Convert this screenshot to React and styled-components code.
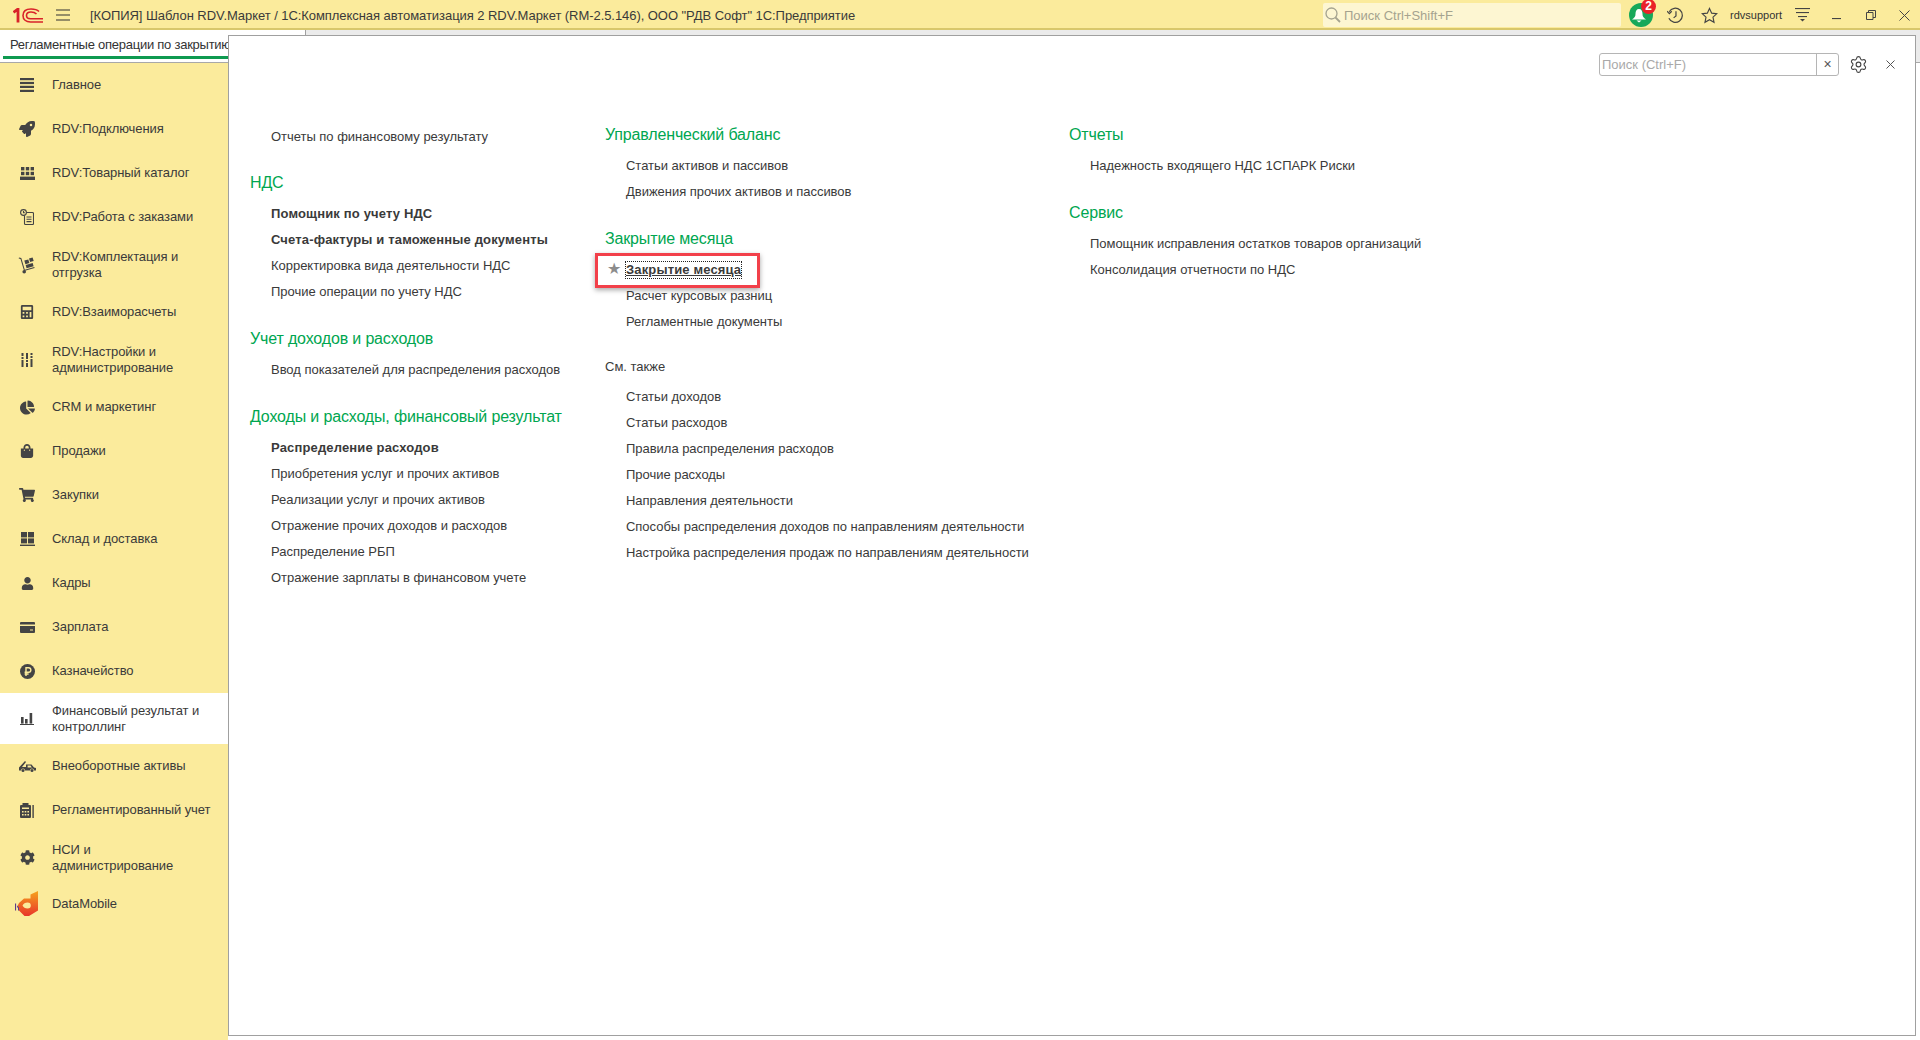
import React from 'react'
import styled, { createGlobalStyle } from 'styled-components'
import { Settings } from 'lucide-react'
import {
  FaRocket, FaCalculator, FaChartPie, FaShoppingBag, FaShoppingCart, FaCog, FaUser,
} from 'react-icons/fa'

const GlobalStyle = createGlobalStyle`
  html, body {
    margin: 0;
    padding: 0;
    height: 100%;
    background: #fff;
    overflow: hidden;
  }
  body {
    font-family: "Liberation Sans", Arial, sans-serif;
    font-size: 13px;
    color: #333;
  }
`

/* small glyphs that the icon packages do not have */
const ListIcon = () => (
  <svg width="14" height="14" viewBox="0 0 14 14" fill="#444">
    <rect y="0" width="14" height="2.2" /><rect y="3.9" width="14" height="2.2" />
    <rect y="7.8" width="14" height="2.2" /><rect y="11.8" width="14" height="2.2" />
  </svg>
)
const CatalogIcon = () => (
  <svg width="15" height="13" viewBox="0 0 15 13" fill="#444">
    <rect x="1" width="3.4" height="3.4" /><rect x="5.8" width="3.4" height="3.4" /><rect x="10.6" width="3.4" height="3.4" />
    <rect x="1" y="4.8" width="3.4" height="3.4" /><rect x="5.8" y="4.8" width="3.4" height="3.4" /><rect x="10.6" y="4.8" width="3.4" height="3.4" />
    <rect y="9.6" width="15" height="3.4" />
  </svg>
)
const OrdersIcon = () => (
  <svg width="14" height="16" viewBox="0 0 14 16" fill="none" stroke="#444" strokeWidth="1.1">
    <rect x="4.5" y="3.5" width="9" height="12" rx="1" />
    <circle cx="3.5" cy="3.5" r="2.9" fill="#fbeb9c" />
    <path d="M3.5 2v1.7h1.4M6.5 8h5M6.5 10.3h5M6.5 12.6h5" />
  </svg>
)
const HandTruckIcon = () => (
  <svg width="18" height="18" viewBox="0 0 18 18" fill="#444">
    <path d="M1 1.5l2.3.6 3.5 11.6 9.5-2.7.3 1.1-10.5 3-3.6-12.1-1.8-.5z" />
    <circle cx="6.2" cy="15.8" r="1.8" />
    <path d="M6.3 4.6l4-1.2 1.1 3.6-4 1.2zM11 2.5l3.6-1 1.1 3.6-3.6 1zM7.7 9l7-2 .9 3.2-7 2z" />
  </svg>
)
const SlidersIcon = () => (
  <svg width="12" height="14" viewBox="0 0 12 14" fill="#444">
    <rect x="0.5" width="2" height="3" /><rect x="0.5" y="4" width="2" height="2" /><rect x="0.5" y="7" width="2" height="7" />
    <rect x="5" width="2" height="6" /><rect x="5" y="7" width="2" height="2" /><rect x="5" y="10" width="2" height="4" />
    <rect x="9.5" width="2" height="2" /><rect x="9.5" y="3" width="2" height="2" /><rect x="9.5" y="6" width="2" height="8" />
  </svg>
)
const WarehouseIcon = () => (
  <svg width="15" height="14" viewBox="0 0 15 14" fill="#444">
    <rect x="1" width="6" height="5.4" /><rect x="8" width="6" height="5.4" />
    <rect x="1" y="6.4" width="6" height="5" /><rect x="8" y="6.4" width="6" height="5" />
    <rect y="12.6" width="15" height="1.4" />
  </svg>
)
const CardIcon = () => (
  <svg width="15" height="11" viewBox="0 0 15 11" fill="#444">
    <path d="M1 0h13a1 1 0 011 1v1.6H0V1a1 1 0 011-1zM0 4h15v6a1 1 0 01-1 1H1a1 1 0 01-1-1zM10 7.4v1.2h3V7.4z" fillRule="evenodd" />
  </svg>
)
const RubleIcon = () => (
  <svg width="15" height="15" viewBox="0 0 15 15">
    <circle cx="7.5" cy="7.5" r="7.5" fill="#444" />
    <path d="M6 12V3.7h2.6a2.2 2.2 0 010 4.5H4.6M4.6 10h4" fill="none" stroke="#fbeb9c" strokeWidth="1.4" />
  </svg>
)
const BarsIcon = () => (
  <svg width="14" height="13" viewBox="0 0 14 13" fill="#444">
    <rect x="1" y="5" width="2.6" height="6.6" /><rect x="5" y="7" width="2.6" height="4.6" />
    <rect x="9.6" y="1" width="2.6" height="10.6" /><rect y="12" width="14" height="1" />
  </svg>
)
const TruckIcon = () => (
  <svg width="17" height="12" viewBox="0 0 17 12" fill="#444">
    <path d="M0 7.5L6 1l1 1-4 5h4V4.5h5.5L15 7.5l2 .5v2.4h-2a2 2 0 00-4 0H6a2 2 0 00-4 0H0zM8.6 5.6v2h4.2l-1.3-2z" fillRule="evenodd" />
    <circle cx="4" cy="10.4" r="1.5" /><circle cx="13" cy="10.4" r="1.5" />
  </svg>
)
const RegulatedIcon = () => (
  <svg width="14" height="15" viewBox="0 0 14 15" fill="#444">
    <path d="M1 2h1.5V0h6v2H10a1 1 0 011 1v11a1 1 0 01-1 1H1a1 1 0 01-1-1V3a1 1 0 011-1zM2 4.5V6h7V4.5zM2 8v1.4h1.6V8zm2.7 0v1.4h1.6V8zm2.7 0v1.4H9V8zM2 11v1.4h1.6V11zm2.7 0v1.4h1.6V11zm2.7 0v1.4H9V11z" fillRule="evenodd" />
    <rect x="12.4" y="2" width="1.4" height="13" />
  </svg>
)
const DataMobileIcon = () => (
  <svg width="24" height="26" viewBox="0 0 24 26">
    <defs>
      <linearGradient id="dmGrad" x1="0" y1="0" x2="0" y2="1">
        <stop offset="0" stopColor="#f6a21e" />
        <stop offset="1" stopColor="#e8352a" />
      </linearGradient>
    </defs>
    <path d="M23 0v19.5L14 25H9.5L3.5 19l-1-4 1.5-3 5-4.600H15.5V3.5zM12.5 11.5c-2.400 0-4 1.200-5 3 1 2 2.600 3 5 3s3.300-1.300 3.300-3-.9-3-3.300-3z" fill="url(#dmGrad)" fillRule="evenodd" />
    <path d="M0 12.5h1.100v7H0zM2 14.5l2 2v3H3v-2.500l-1-1z" fill="#5b3a8c" />
  </svg>
)

const NAV = [
  { label: 'Главное', icon: <ListIcon /> },
  { label: 'RDV:Подключения', icon: <FaRocket size={16} /> },
  { label: 'RDV:Товарный каталог', icon: <CatalogIcon /> },
  { label: 'RDV:Работа с заказами', icon: <OrdersIcon /> },
  { label: 'RDV:Комплектация и отгрузка', icon: <HandTruckIcon /> },
  { label: 'RDV:Взаиморасчеты', icon: <FaCalculator size={14} /> },
  { label: 'RDV:Настройки и администрирование', icon: <SlidersIcon /> },
  { label: 'CRM и маркетинг', icon: <FaChartPie size={15} /> },
  { label: 'Продажи', icon: <FaShoppingBag size={14} /> },
  { label: 'Закупки', icon: <FaShoppingCart size={16} /> },
  { label: 'Склад и доставка', icon: <WarehouseIcon /> },
  { label: 'Кадры', icon: <FaUser size={13} /> },
  { label: 'Зарплата', icon: <CardIcon /> },
  { label: 'Казначейство', icon: <RubleIcon /> },
  { label: 'Финансовый результат и контроллинг', icon: <BarsIcon />, active: true },
  { label: 'Внеоборотные активы', icon: <TruckIcon /> },
  { label: 'Регламентированный учет', icon: <RegulatedIcon /> },
  { label: 'НСИ и администрирование', icon: <FaCog size={15} /> },
  { label: 'DataMobile', icon: <DataMobileIcon />, short: true },
]

const COLUMNS = [
  {
    width: 355,
    groups: [
      { links: [{ text: 'Отчеты по финансовому результату' }], tight: true },
      {
        title: 'НДС',
        links: [
          { text: 'Помощник по учету НДС', bold: true },
          { text: 'Счета-фактуры и таможенные документы', bold: true },
          { text: 'Корректировка вида деятельности НДС' },
          { text: 'Прочие операции по учету НДС' },
        ],
      },
      {
        title: 'Учет доходов и расходов',
        links: [{ text: 'Ввод показателей для распределения расходов' }],
      },
      {
        title: 'Доходы и расходы, финансовый результат',
        links: [
          { text: 'Распределение расходов', bold: true },
          { text: 'Приобретения услуг и прочих активов' },
          { text: 'Реализации услуг и прочих активов' },
          { text: 'Отражение прочих доходов и расходов' },
          { text: 'Распределение РБП' },
          { text: 'Отражение зарплаты в финансовом учете' },
        ],
      },
    ],
  },
  {
    width: 464,
    top: 1,
    groups: [
      {
        title: 'Управленческий баланс',
        links: [
          { text: 'Статьи активов и пассивов' },
          { text: 'Движения прочих активов и пассивов' },
        ],
      },
      {
        title: 'Закрытие месяца',
        tight: true,
        links: [
          { text: 'Закрытие месяца', focused: true },
          { text: 'Расчет курсовых разниц' },
          { text: 'Регламентные документы' },
        ],
      },
      {
        subtitle: 'См. также',
        links: [
          { text: 'Статьи доходов' },
          { text: 'Статьи расходов' },
          { text: 'Правила распределения расходов' },
          { text: 'Прочие расходы' },
          { text: 'Направления деятельности' },
          { text: 'Способы распределения доходов по направлениям деятельности' },
          { text: 'Настройка распределения продаж по направлениям деятельности' },
        ],
      },
    ],
  },
  {
    width: 500,
    top: 1,
    groups: [
      {
        title: 'Отчеты',
        links: [{ text: 'Надежность входящего НДС 1СПАРК Риски' }],
      },
      {
        title: 'Сервис',
        links: [
          { text: 'Помощник исправления остатков товаров организаций' },
          { text: 'Консолидация отчетности по НДС' },
        ],
      },
    ],
  },
]

function App() {
  return (
    <Page>
      <GlobalStyle />
      <TitleBar>
        <Logo>
          <svg width="30" height="15" viewBox="0 0 30 15" fill="none" stroke="#d8232a">
            <path d="M0.5 4.5L5 1V14.5" strokeWidth="2.8" />
            <path d="M26 3.5C24 1.5 21 1 18 1c-5 0-8 2.5-8 6.5s3 6.5 7.5 6.500H30" strokeWidth="1.6" />
            <path d="M23.5 6C22 4.5 20 4 18 4c-2.500 0-4.500 1.200-4.500 3.500S15 10.800 17.500 10.800H30" strokeWidth="1.6" />
          </svg>
        </Logo>
        <Burger>
          <svg width="14" height="12" viewBox="0 0 14 12" stroke="#333" strokeWidth="1.2">
            <path d="M0 1h14M0 6h14M0 11h14" />
          </svg>
        </Burger>
        <WindowTitle>
          [КОПИЯ] Шаблон RDV.Маркет / 1С:Комплексная автоматизация 2 RDV.Маркет (RM-2.5.146), ООО "РДВ Софт" 1С:Предприятие
        </WindowTitle>
        <GlobalSearch>
          <svg width="16" height="16" viewBox="0 0 16 16" fill="none" stroke="#a5a38f" strokeWidth="1.3">
            <circle cx="6.5" cy="6.5" r="5.5" />
            <path d="M10.5 10.5l4.5 4.5" strokeWidth="1.8" />
          </svg>
          Поиск Ctrl+Shift+F
        </GlobalSearch>
        <Bell>
          <svg width="15" height="15" viewBox="0 0 15 15" fill="#fff">
            <path d="M7 1c2.500 0 3.500 2 3.500 5 0 2.500 1 3.500 3.500 5.500H0C2.500 9.500 3.500 8.500 3.500 6 3.500 3 4.500 1 7 1zM4.500 12.500h5L7 14.500z" />
          </svg>
          <BellBadge>2</BellBadge>
        </Bell>
        <BarButton $width={34} $margin={5}>
          <svg width="17" height="17" viewBox="0 0 18 18" fill="none" stroke="#444" strokeWidth="1.3">
            <path d="M2.300 5A7.500 7.500 0 112 12" />
            <path d="M0 4.500l2.500 2.500L5 4.500" />
            <path d="M9.500 4.500V9.500l-2.500 2" />
          </svg>
        </BarButton>
        <BarButton $width={34}>
          <svg width="17" height="17" viewBox="0 0 18 18" fill="none" stroke="#444" strokeWidth="1.2">
            <path d="M9 1.500l2.300 5 5.400.6-4 3.700 1.100 5.400L9 13.500l-4.800 2.700 1.100-5.400-4-3.700 5.400-.6z" />
          </svg>
        </BarButton>
        <UserName>rdvsupport</UserName>
        <BarButton $width={35}>
          <svg width="15" height="14" viewBox="0 0 15 14" fill="#444">
            <rect width="15" height="1.1" /><rect x="1" y="4" width="13" height="1.1" /><rect x="3" y="8" width="9" height="1.1" />
            <path d="M5 11h5l-2.500 2.500z" />
          </svg>
        </BarButton>
        <BarButton $width={34}>
          <svg width="10" height="10" viewBox="0 0 10 10" fill="#444"><rect y="8" width="9" height="1.1" /></svg>
        </BarButton>
        <BarButton $width={34}>
          <svg width="10" height="10" viewBox="0 0 10 10" fill="none" stroke="#444"><path d="M.5 2.500h6.500v7H.5zM2.500 2.500V.5h7v7H7" /></svg>
        </BarButton>
        <BarButton $width={32}>
          <svg width="11" height="11" viewBox="0 0 11 11" stroke="#444" strokeWidth="1"><path d="M.5.5l10 10M10.500.5l-10 10" /></svg>
        </BarButton>
      </TitleBar>

      <Workspace>
        <LeftColumn>
          <TabStrip>
            <TabLabel>Регламентные операции по закрытию месяца</TabLabel>
          </TabStrip>
          <Sidebar>
            {NAV.map((item) => (
              <NavItem key={item.label} $active={item.active} $short={item.short}>
                <NavIcon>{item.icon}</NavIcon>
                <NavLabel>{item.label}</NavLabel>
              </NavItem>
            ))}
          </Sidebar>
        </LeftColumn>

        <RightColumn>
          <TabTail />
          <PanelRow>
            <Panel>
              <PanelToolbar>
                <PanelSearch>
                  <PanelSearchText>Поиск (Ctrl+F)</PanelSearchText>
                  <PanelSearchClear>×</PanelSearchClear>
                </PanelSearch>
                <GearButton>
                  <Settings size={19} strokeWidth={1.4} color="#444" />
                </GearButton>
                <PanelClose>
                  <svg width="9" height="9" viewBox="0 0 9 9" stroke="#555" strokeWidth="1"><path d="M.5.5l8 8M8.500.5l-8 8" /></svg>
                </PanelClose>
              </PanelToolbar>

              <Columns>
                {COLUMNS.map((col, i) => (
                  <Column key={i} $width={col.width} $top={col.top}>
                    {col.groups.map((group, j) => (
                      <Group key={j} $tight={group.tight}>
                        {group.title && <GroupTitle>{group.title}</GroupTitle>}
                        {group.subtitle && <GroupSubtitle>{group.subtitle}</GroupSubtitle>}
                        {group.links.map((link) => (
                          <LinkRow key={link.text}>
                            {link.focused && (
                              <Callout>
                                <Star>★</Star>
                              </Callout>
                            )}
                            <LinkText $bold={link.bold} $focused={link.focused}>{link.text}</LinkText>
                          </LinkRow>
                        ))}
                      </Group>
                    ))}
                  </Column>
                ))}
              </Columns>
            </Panel>
            <PanelEdge />
          </PanelRow>
        </RightColumn>
      </Workspace>
    </Page>
  )
}

export default App

const Page = styled.div`
  width: 1920px;
  height: 1040px;
  display: flex;
  flex-direction: column;
  background: #fff;
  overflow: hidden;
`

const TitleBar = styled.header`
  height: 30px;
  box-sizing: border-box;
  padding-top: 2px;
  flex: none;
  display: flex;
  align-items: center;
  background: #fbeb9c;
  border-bottom: 2px solid #d8c76b;
`

const Logo = styled.div`
  width: 50px;
  padding-left: 13px;
  box-sizing: border-box;
  display: flex;
  align-items: center;
`

const Burger = styled.div`
  width: 40px;
  padding-left: 6px;
  box-sizing: border-box;
  display: flex;
  align-items: center;
`

const WindowTitle = styled.div`
  flex: 1;
  white-space: nowrap;
  overflow: hidden;
  font-size: 13px;
  letter-spacing: -0.06px;
  color: #3a3a3a;
`

const GlobalSearch = styled.div`
  width: 298px;
  height: 24px;
  display: flex;
  align-items: center;
  gap: 3px;
  padding-left: 2px;
  box-sizing: border-box;
  background: #fdf6d2;
  border-radius: 2px;
  color: #a5a38f;
  font-size: 13px;
`

const Bell = styled.div`
  position: relative;
  width: 24px;
  height: 24px;
  margin-left: 8px;
  padding-right: 3px;
  box-sizing: border-box;
  border-radius: 50%;
  background: #17a85a;
  display: flex;
  align-items: center;
  justify-content: center;
`

const BellBadge = styled.span`
  position: absolute;
  top: -4px;
  right: -3px;
  width: 15px;
  height: 15px;
  border-radius: 50%;
  background: #ea2229;
  color: #fff;
  font-size: 12px;
  font-weight: 700;
  line-height: 15px;
  text-align: center;
`

const BarButton = styled.div`
  width: ${(p) => p.$width}px;
  margin-left: ${(p) => p.$margin || 0}px;
  height: 24px;
  flex: none;
  display: flex;
  align-items: center;
  justify-content: center;
`

const UserName = styled.div`
  width: 55px;
  margin-left: 4px;
  font-size: 11px;
  white-space: nowrap;
  color: #333;
`

const Workspace = styled.div`
  flex: 1;
  min-height: 0;
  display: flex;
`

const LeftColumn = styled.div`
  width: 228px;
  flex: none;
  display: flex;
  flex-direction: column;
`

const TabStrip = styled.div`
  height: 33px;
  flex: none;
  box-sizing: border-box;
  padding: 0 0 0 3px;
  background: #fff;
  border-bottom: 1px solid #a8a8a8;
  overflow: hidden;
`

const TabLabel = styled.div`
  height: 29px;
  box-sizing: border-box;
  padding: 7px 0 0 7px;
  line-height: 16px;
  font-size: 13px;
  letter-spacing: -0.25px;
  white-space: nowrap;
  color: #333;
  border-bottom: 3px solid #0e9a50;
`

const Sidebar = styled.nav`
  flex: 1;
  background: #fbeb9c;
`

const NavItem = styled.div`
  min-height: ${(p) => (p.$short ? 42 : 44)}px;
  box-sizing: border-box;
  padding: ${(p) => (p.$short ? 0 : 9.5)}px 0;
  display: flex;
  align-items: center;
  background: ${(p) => (p.$active ? '#fff' : 'transparent')};
`

const NavIcon = styled.div`
  width: 52px;
  padding-left: 2px;
  box-sizing: border-box;
  flex: none;
  display: flex;
  align-items: center;
  justify-content: center;
  color: #444;
`

const NavLabel = styled.div`
  max-width: 162px;
  font-size: 13px;
  line-height: 16px;
  letter-spacing: -0.08px;
  color: #3a3a3a;
`

const RightColumn = styled.div`
  flex: 1;
  min-width: 0;
  display: flex;
  flex-direction: column;
`

// the part of the tab row that shows above the panel
const TabTail = styled.div`
  height: 5px;
  flex: none;
  background: linear-gradient(to right, #fff 77px, #a0a0a0 77px, #a0a0a0 78px, #ebebeb 78px);
`

const PanelRow = styled.div`
  flex: 1;
  min-height: 0;
  display: flex;
  padding-bottom: 4px;
`

const Panel = styled.main`
  flex: 1;
  min-width: 0;
  background: #fff;
  border: 1px solid #a0a0a0;
`

const PanelEdge = styled.div`
  width: 4px;
  height: 27px;
  flex: none;
  background: #ebebeb;
  border-bottom: 1px solid #a8a8a8;
`

const PanelToolbar = styled.div`
  height: 88px;
  box-sizing: border-box;
  padding: 17px 13px 0 0;
  display: flex;
  align-items: flex-start;
  justify-content: flex-end;
`

const PanelSearch = styled.div`
  width: 240px;
  height: 23px;
  box-sizing: border-box;
  display: flex;
  border: 1px solid #b5b5b5;
  border-radius: 3px;
`

const PanelSearchText = styled.div`
  flex: 1;
  padding-left: 2px;
  line-height: 21px;
  font-size: 13px;
  color: #a9a9a9;
  border-right: 1px solid #b5b5b5;
`

const PanelSearchClear = styled.div`
  width: 21px;
  line-height: 20px;
  text-align: center;
  color: #555;
  font-size: 14px;
`

const GearButton = styled.div`
  width: 39px;
  height: 23px;
  display: flex;
  align-items: center;
  justify-content: center;
`

const PanelClose = styled.div`
  width: 24px;
  height: 23px;
  display: flex;
  align-items: center;
  justify-content: center;
`

const Columns = styled.div`
  display: flex;
  padding-left: 21px;
`

const Column = styled.div`
  width: ${(p) => p.$width}px;
  padding-top: ${(p) => p.$top || 0}px;
  flex: none;
`

const Group = styled.section`
  margin-bottom: ${(p) => (p.$tight ? 23 : 24)}px;
`

const GroupTitle = styled.h3`
  margin: 0 0 8px;
  height: 20px;
  line-height: 20px;
  font-size: 16px;
  font-weight: 400;
  letter-spacing: -0.15px;
  color: #00a650;
  white-space: nowrap;
`

const GroupSubtitle = styled.div`
  height: 18px;
  margin-bottom: 8px;
  line-height: 18px;
  font-size: 13px;
  color: #3a3a3a;
`

const LinkRow = styled.div`
  position: relative;
  height: 26px;
  padding-left: 21px;
  display: flex;
  align-items: center;
`

const LinkText = styled.span`
  position: relative;
  font-size: 13px;
  line-height: 16px;
  white-space: nowrap;
  color: #3a3a3a;
  font-weight: ${(p) => (p.$bold || p.$focused ? 700 : 400)};
  letter-spacing: ${(p) => (p.$bold || p.$focused ? '0.15px' : '-0.03px')};
  text-decoration: ${(p) => (p.$focused ? 'underline' : 'none')};
  outline: ${(p) => (p.$focused ? '1px dotted #222' : 'none')};
`

// red frame drawn over the month-closing link
const Callout = styled.div`
  position: absolute;
  left: -10px;
  top: -4px;
  width: 165px;
  height: 35px;
  box-sizing: border-box;
  border: 3px solid #f2404a;
  box-shadow: 0 2px 5px rgba(0, 0, 0, 0.35);
`

const Star = styled.span`
  position: absolute;
  left: 9px;
  top: 3px;
  font-family: "DejaVu Sans", sans-serif;
  font-size: 16px;
  line-height: 20px;
  color: #8c8c8c;
`
